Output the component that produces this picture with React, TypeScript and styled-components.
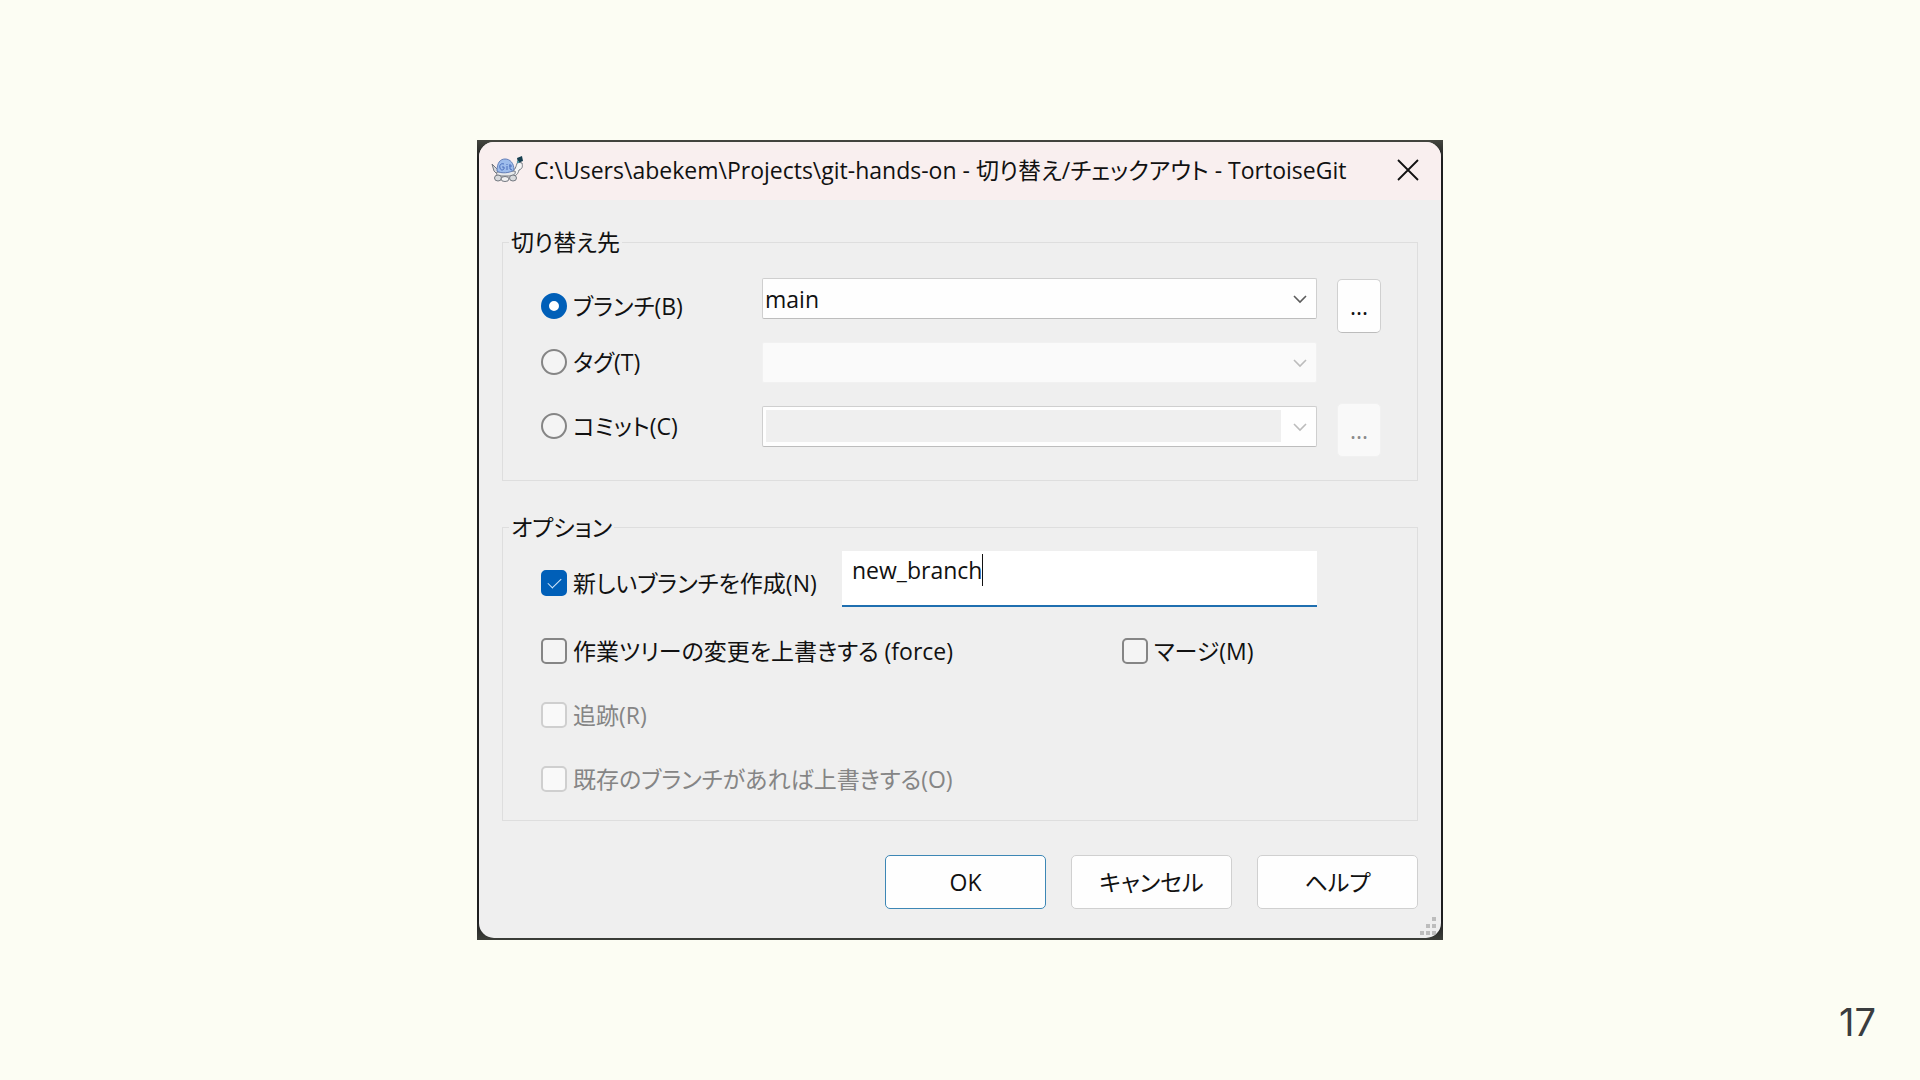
import React from "react";
import styled, { createGlobalStyle } from "styled-components";

const uiFont = `"Open Sans", "Noto Sans CJK JP", sans-serif`;

const GlobalStyle = createGlobalStyle`
  * { box-sizing: border-box; }
  body {
    margin: 0;
    background: #fcfdf3;
    color: #111;
    font-family: ${uiFont};
    font-size: 23px;
    line-height: 32px;
    font-feature-settings: "palt";
  }
`;

const Slide = styled.div`
  display: grid;
  grid-template-rows: 1fr auto 1fr;
  justify-items: center;
  min-height: 100vh;
`;

const PageNumber = styled.footer`
  grid-row: 3;
  align-self: end;
  justify-self: end;
  padding: 0 44px 38px;
  color: #3a3d3f;
  font-family: Inter, sans-serif;
  font-size: 38px;
  line-height: 40px;
`;

const Backdrop = styled.main`
  grid-row: 2;
  width: 100%;
  max-width: 966px;
  padding: 2px;
  background: linear-gradient(#44463f, #1d1e1f 20px calc(100% - 20px), #3c3e38);
`;

const Dialog = styled.form`
  position: relative;
  border-radius: 15px;
  background: #efefef;
  overflow: hidden;
`;

const TitleBar = styled.header`
  display: flex;
  align-items: center;
  height: 58px;
  padding: 0 22px 2px 12px;
  background: #f9efef;
`;

const Title = styled.h1`
  flex: 1;
  margin: 0 0 0 10px;
  font-size: 23px;
  font-weight: 400;
  line-height: 32px;
  white-space: nowrap;
`;

const CloseButton = styled.button`
  display: flex;
  padding: 0;
  border: 0;
  background: none;
  color: #111;
`;

const Body = styled.div`
  display: flex;
  flex-direction: column;
  padding: 26px 23px 29px;
`;

const Group = styled.fieldset`
  min-width: 0;
  margin: 0 0 30px;
  padding: 0 36px 9px 38px;
  border: 1px solid #dedede;
`;

const Legend = styled.legend`
  margin-left: -32px;
  padding: 0 2px;
`;

const Columns = styled.div`
  display: flex;
  gap: 20px;
  padding: 20px 0 9px;
`;

const RadioColumn = styled.div`
  display: grid;
  grid-template-rows: 56px 56px 72px;
  flex: 0 0 201px;
`;

const Column = styled.div<{ $gap: number; $width?: number; $top?: number }>`
  display: flex;
  flex-direction: column;
  flex: ${(p) => (p.$width ? `0 0 ${p.$width}px` : "1")};
  gap: ${(p) => p.$gap}px;
  padding-top: ${(p) => p.$top ?? 0}px;
`;

const Choice = styled.label<{ $off?: boolean }>`
  display: flex;
  align-items: center;
  gap: 6px;
  color: ${(p) => (p.$off ? "#858585" : "#111")};
  white-space: nowrap;
`;

const Radio = styled.input.attrs({ type: "radio" })`
  appearance: none;
  width: 26px;
  height: 26px;
  margin: 0;
  border: 2px solid #858585;
  border-radius: 50%;
  background: #f4f4f4;
  &:checked {
    border: 8px solid #005fb8;
    background: #fff;
  }
`;

const Check = styled.input.attrs({ type: "checkbox" })`
  appearance: none;
  display: grid;
  place-items: center;
  width: 26px;
  height: 26px;
  margin: 0;
  border: 2px solid #858585;
  border-radius: 5px;
  background: #f4f4f4;
  &:checked {
    border-color: #005fb8;
    background: #005fb8;
  }
  &:checked::after {
    content: "";
    width: 6px;
    height: 12px;
    margin-bottom: 4px;
    border: solid #d4e8fa;
    border-width: 0 1px 1px 0;
    rotate: 45deg;
  }
  &:disabled {
    border-color: #cfcfcf;
    background: #f9f9f9;
  }
`;

const Combo = styled.div<{ $look: "normal" | "flat" | "inset" }>`
  display: grid;
  height: 41px;
  padding: ${(p) => (p.$look === "inset" ? "3px 35px 4px 3px" : "0")};
  border: 1px solid ${(p) => (p.$look === "flat" ? "#f1f1f1" : "#cfcfcf")};
  border-bottom-color: ${(p) => (p.$look === "flat" ? "#f1f1f1" : "#bdbdbd")};
  border-radius: 2px;
  background: ${(p) => (p.$look === "flat" ? "#fafafa" : "#fefefe")};
  position: relative;
  & > svg {
    position: absolute;
    right: 9px;
    top: 16px;
    color: ${(p) => (p.$look === "normal" ? "#5c5c5c" : "#bcbcbc")};
    pointer-events: none;
  }
`;

const Select = styled.select<{ $inset?: boolean }>`
  appearance: none;
  min-width: 0;
  padding: 0 2px;
  border: 0;
  background: ${(p) => (p.$inset ? "#efefef" : "transparent")};
  color: #111;
  font: inherit;
  opacity: 1;
`;

const MoreButton = styled.button`
  height: 54px;
  padding: 0;
  border: 1px solid #d0d0d0;
  border-bottom-color: #bcbcbc;
  border-radius: 5px;
  background: #fefefe;
  color: #111;
  font: inherit;
  &:disabled {
    border-color: #f1f1f1;
    background: #f9f9f9;
    color: #8a8a8a;
  }
`;

const Options = styled.div`
  display: grid;
  grid-template-rows: 68px;
  grid-auto-rows: 64px;
  padding-top: 8px;
`;

const OptionRow = styled.div<{ $first?: boolean }>`
  display: grid;
  grid-template-columns: ${(p) => (p.$first ? "301px 1fr 64px" : "581px 1fr")};
  padding-bottom: ${(p) => (p.$first ? "4px" : "0")};
`;

const TextBox = styled.div`
  display: flex;
  height: 56px;
  padding: 3px 10px;
  border-bottom: 2px solid #1f6fb0;
  background: #fff;
`;

const TextInput = styled.input`
  field-sizing: content;
  height: 32px;
  padding: 0;
  border: 0;
  outline: 0;
  background: none;
  color: #111;
  font: inherit;
`;

const Caret = styled.span`
  width: 1px;
  height: 32px;
  background: #111;
`;

const Actions = styled.div`
  display: flex;
  justify-content: flex-end;
  gap: 25px;
  padding-top: 4px;
`;

const ActionButton = styled.button<{ $primary?: boolean }>`
  width: 161px;
  height: 54px;
  padding: 0;
  border: 1px solid ${(p) => (p.$primary ? "#3d87b5" : "#d0d0d0")};
  border-radius: 5px;
  background: #fefefe;
  color: #111;
  font: inherit;
`;

const Grip = styled.svg`
  position: absolute;
  right: 5px;
  bottom: 3px;
`;

const Chevron = () => (
  <svg width="14" height="9" viewBox="0 0 14 9" fill="none" stroke="currentColor" strokeWidth="1.6" aria-hidden="true">
    <path d="M1 1l6 6 6-6" />
  </svg>
);

const TurtleIcon = () => (
  <svg width="33" height="28" viewBox="0 0 33 28" aria-hidden="true">
    <g stroke="#737880" strokeWidth="1">
      <path d="M1 8l6 6-1 4-3-3z" fill="#d5d8dc" />
      <path d="M22 14c3 0 3-6 5-8l4 1c1 4 0 6-3 7-1 4-3 6-6 6z" fill="#f5f5f6" />
      <path d="M6 16l18-1c1 3-1 4-4 5H8c-2 0-3-2-2-4z" fill="#e6e8ea" />
      <ellipse cx="7" cy="22" rx="3.5" ry="3" fill="#d8dadd" />
      <ellipse cx="14" cy="23" rx="4" ry="2.5" fill="#f1f1f2" />
      <ellipse cx="22" cy="22" rx="3.5" ry="3" fill="#d8dadd" />
    </g>
    <path d="M6 15C6 7 9 3 14 3s9 4 9 11c-4 3-13 4-17 1z" fill="#9dbcec" stroke="#647fb8" />
    <path d="M13 8c-3-1-5 1-4 4s3 2 4 1v-2h-2M16 10v4M16 8v1M19 8v5l2 1M18 10h3" fill="none" stroke="#4c6fbc" />
    <path d="M26 2l5-2 1 5-5 2z" fill="#173f50" />
    <circle cx="27" cy="6" r="1.2" fill="#4a91a1" />
  </svg>
);

const gripDots = [[12, 0], [6, 7], [12, 7], [0, 14], [6, 14], [12, 14]];

export default function App() {
  return (
    <>
      <GlobalStyle />
      <Slide>
        <Backdrop>
          <Dialog onSubmit={(e) => e.preventDefault()}>
            <TitleBar>
              <TurtleIcon />
              <Title>C:\Users\abekem\Projects\git-hands-on - 切り替え/チェックアウト - TortoiseGit</Title>
              <CloseButton type="button" aria-label="閉じる">
                <svg width="22" height="22" viewBox="0 0 22 22" stroke="currentColor" strokeWidth="1.8" aria-hidden="true">
                  <path d="M1 1l20 20M21 1L1 21" />
                </svg>
              </CloseButton>
            </TitleBar>
            <Body>
              <Group>
                <Legend>切り替え先</Legend>
                <Columns>
                  <RadioColumn>
                    <Choice><Radio name="target" defaultChecked />ブランチ(B)</Choice>
                    <Choice><Radio name="target" />タグ(T)</Choice>
                    <Choice><Radio name="target" />コミット(C)</Choice>
                  </RadioColumn>
                  <Column $gap={23}>
                    <Combo $look="normal">
                      <Select aria-label="ブランチ" defaultValue="main"><option>main</option></Select>
                      <Chevron />
                    </Combo>
                    <Combo $look="flat">
                      <Select aria-label="タグ" disabled />
                      <Chevron />
                    </Combo>
                    <Combo $look="inset">
                      <Select $inset aria-label="コミット" disabled />
                      <Chevron />
                    </Combo>
                  </Column>
                  <Column $width={44} $gap={70} $top={1}>
                    <MoreButton type="button">...</MoreButton>
                    <MoreButton type="button" disabled>...</MoreButton>
                  </Column>
                </Columns>
              </Group>
              <Group>
                <Legend>オプション</Legend>
                <Options>
                  <OptionRow $first>
                    <Choice><Check defaultChecked />新しいブランチを作成(N)</Choice>
                    <TextBox>
                      <TextInput aria-label="新しいブランチ名" defaultValue="new_branch" />
                      <Caret />
                    </TextBox>
                  </OptionRow>
                  <OptionRow>
                    <Choice><Check />作業ツリーの変更を上書きする (force)</Choice>
                    <Choice><Check />マージ(M)</Choice>
                  </OptionRow>
                  <OptionRow>
                    <Choice $off><Check disabled />追跡(R)</Choice>
                  </OptionRow>
                  <OptionRow>
                    <Choice $off><Check disabled />既存のブランチがあれば上書きする(O)</Choice>
                  </OptionRow>
                </Options>
              </Group>
              <Actions>
                <ActionButton type="submit" $primary>OK</ActionButton>
                <ActionButton type="button">キャンセル</ActionButton>
                <ActionButton type="button">ヘルプ</ActionButton>
              </Actions>
            </Body>
            <Grip width="16" height="18" viewBox="0 0 16 18" aria-hidden="true">
              {gripDots.map(([x, y]) => (
                <rect key={`${x}-${y}`} x={x} y={y} width="4" height="4" fill="#bdbdbd" />
              ))}
            </Grip>
          </Dialog>
        </Backdrop>
        <PageNumber>17</PageNumber>
      </Slide>
    </>
  );
}
